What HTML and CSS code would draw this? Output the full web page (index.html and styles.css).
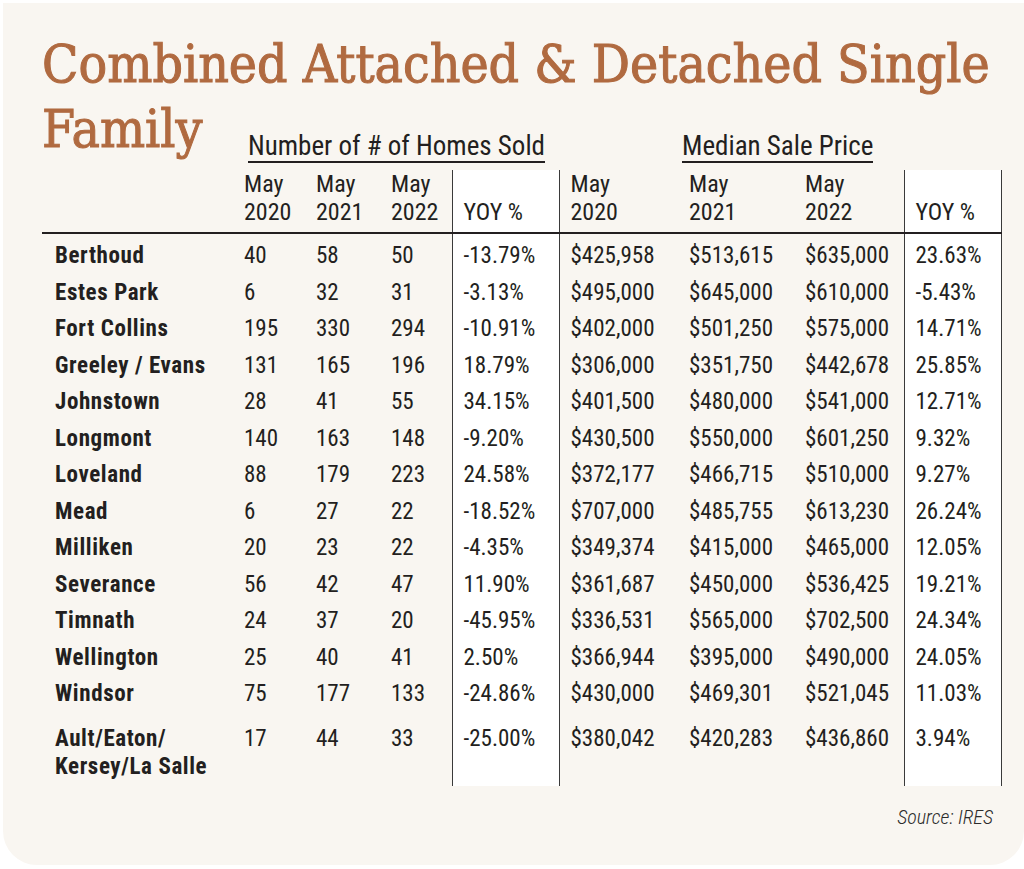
FILE: index.html
```html
<!DOCTYPE html>
<html lang="en">
<head>
<meta charset="utf-8">
<title>Combined Attached &amp; Detached Single Family</title>
<link rel="stylesheet" href="styles.css">
</head>
<body>
<main class="card">
  <h1 class="title">Combined Attached &amp; Detached Single<br>Family</h1>
  <table class="stats">
    <colgroup>
      <col class="c-name"><col class="c-n1"><col class="c-n2"><col class="c-n3"><col class="c-yoy1">
      <col class="c-p1"><col class="c-p2"><col class="c-p3"><col class="c-yoy2">
    </colgroup>
    <thead>
      <tr class="groups">
        <th></th>
        <th colspan="4" class="group g1"><span>Number of # of Homes Sold</span></th>
        <th></th>
        <th colspan="3" class="group g2"><span>Median Sale Price</span></th>
      </tr>
      <tr class="years">
        <th></th>
        <th>May<br>2020</th><th>May<br>2021</th><th>May<br>2022</th>
        <th class="yoy">YOY %</th>
        <th>May<br>2020</th><th>May<br>2021</th><th>May<br>2022</th>
        <th class="yoy">YOY %</th>
      </tr>
    </thead>
    <tbody>
      <tr><th>Berthoud</th><td>40</td><td>58</td><td>50</td><td class="yoy">-13.79%</td><td>$425,958</td><td>$513,615</td><td>$635,000</td><td class="yoy">23.63%</td></tr>
      <tr><th>Estes Park</th><td>6</td><td>32</td><td>31</td><td class="yoy">-3.13%</td><td>$495,000</td><td>$645,000</td><td>$610,000</td><td class="yoy">-5.43%</td></tr>
      <tr><th>Fort Collins</th><td>195</td><td>330</td><td>294</td><td class="yoy">-10.91%</td><td>$402,000</td><td>$501,250</td><td>$575,000</td><td class="yoy">14.71%</td></tr>
      <tr><th>Greeley / Evans</th><td>131</td><td>165</td><td>196</td><td class="yoy">18.79%</td><td>$306,000</td><td>$351,750</td><td>$442,678</td><td class="yoy">25.85%</td></tr>
      <tr><th>Johnstown</th><td>28</td><td>41</td><td>55</td><td class="yoy">34.15%</td><td>$401,500</td><td>$480,000</td><td>$541,000</td><td class="yoy">12.71%</td></tr>
      <tr><th>Longmont</th><td>140</td><td>163</td><td>148</td><td class="yoy">-9.20%</td><td>$430,500</td><td>$550,000</td><td>$601,250</td><td class="yoy">9.32%</td></tr>
      <tr><th>Loveland</th><td>88</td><td>179</td><td>223</td><td class="yoy">24.58%</td><td>$372,177</td><td>$466,715</td><td>$510,000</td><td class="yoy">9.27%</td></tr>
      <tr><th>Mead</th><td>6</td><td>27</td><td>22</td><td class="yoy">-18.52%</td><td>$707,000</td><td>$485,755</td><td>$613,230</td><td class="yoy">26.24%</td></tr>
      <tr><th>Milliken</th><td>20</td><td>23</td><td>22</td><td class="yoy">-4.35%</td><td>$349,374</td><td>$415,000</td><td>$465,000</td><td class="yoy">12.05%</td></tr>
      <tr><th>Severance</th><td>56</td><td>42</td><td>47</td><td class="yoy">11.90%</td><td>$361,687</td><td>$450,000</td><td>$536,425</td><td class="yoy">19.21%</td></tr>
      <tr><th>Timnath</th><td>24</td><td>37</td><td>20</td><td class="yoy">-45.95%</td><td>$336,531</td><td>$565,000</td><td>$702,500</td><td class="yoy">24.34%</td></tr>
      <tr><th>Wellington</th><td>25</td><td>40</td><td>41</td><td class="yoy">2.50%</td><td>$366,944</td><td>$395,000</td><td>$490,000</td><td class="yoy">24.05%</td></tr>
      <tr><th>Windsor</th><td>75</td><td>177</td><td>133</td><td class="yoy">-24.86%</td><td>$430,000</td><td>$469,301</td><td>$521,045</td><td class="yoy">11.03%</td></tr>
      <tr class="last"><th>Ault/Eaton/<br>Kersey/La Salle</th><td>17</td><td>44</td><td>33</td><td class="yoy">-25.00%</td><td>$380,042</td><td>$420,283</td><td>$436,860</td><td class="yoy">3.94%</td></tr>
    </tbody>
  </table>
  <p class="source">Source: IRES</p>
</main>
</body>
</html>
```

FILE: styles.css
```css
* { box-sizing: border-box; }
html, body { margin: 0; padding: 0; background: #ffffff; }
body { width: 1024px; height: 869px; overflow: hidden; }

.card {
  margin: 3px 0 0 3px;
  width: 1021px;
  height: 862px;
  background: #f9f6f1;
  border-radius: 0 0 34px 34px;
  padding: 28px 31px 0 39px;
  color: #231f20;
  font-family: "Roboto", "Open Sans", sans-serif;
  font-stretch: 75%;
}

.title {
  margin: 0;
  font-family: "DejaVu Serif", serif;
  font-stretch: condensed;
  font-weight: normal;
  font-size: 53px;
  line-height: 65px;
  color: #b06a40;
  -webkit-text-stroke: 1px #b06a40;
  white-space: nowrap;
}

.stats {
  margin-top: -34px;
  border-collapse: collapse;
  table-layout: fixed;
  width: 959px;
  font-size: 23px;
}
.c-name { width: 191px; }
.c-n1 { width: 72px; }
.c-n2 { width: 75px; }
.c-n3 { width: 72px; }
.c-yoy1 { width: 107px; }
.c-p1 { width: 119px; }
.c-p2 { width: 116px; }
.c-p3 { width: 110px; }
.c-yoy2 { width: 97px; }

.stats th, .stats td {
  padding: 0 0 0 11px;
  text-align: left;
  font-weight: normal;
  white-space: nowrap;
  line-height: 36.5px;
  vertical-align: top;
}

.groups th { height: 43px; vertical-align: bottom; padding-bottom: 7px; line-height: 0; }
.group span {
  display: block;
  width: fit-content;
  font-size: 27px;
  line-height: 30px;
  border-bottom: 2px solid #231f20;
}
.g1 { padding-left: 15px !important; }
.g2 { padding-left: 4px !important; }

.years th {
  font-size: 24px;
  line-height: 28px;
  vertical-align: bottom;
  padding-bottom: 6px;
  border-bottom: 2px solid #231f20;
}

.stats .yoy {
  background: #ffffff;
  border-left: 1.5px solid #3a3a3a;
  border-right: 1.5px solid #3a3a3a;
}

.stats tbody th {
  font-weight: bold;
  letter-spacing: 0.6px;
  padding-left: 13px;
}
.stats tbody tr:first-child > * { padding-top: 4px; }
.stats tr.last > * {
  line-height: 28px;
  padding-top: 12px;
  padding-bottom: 5.5px;
}

.source {
  margin: 19px 0 0;
  text-align: right;
  font-style: italic;
  font-weight: 300;
  font-size: 20px;
  line-height: 24px;
  color: #2b2b2b;
}
```
